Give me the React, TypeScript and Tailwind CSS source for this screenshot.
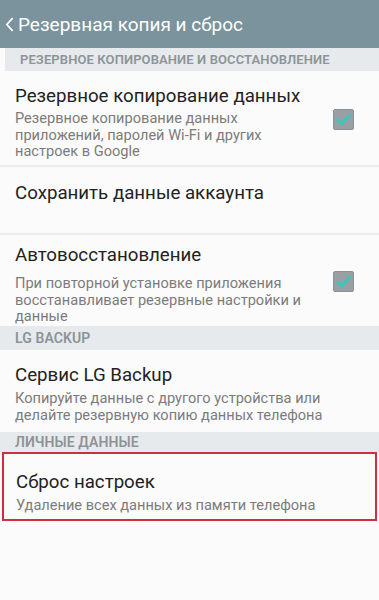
import React from 'react'

const font = { fontFamily: 'Roboto, "Noto Sans", sans-serif' }

function Check() {
  return (
    <div className="flex h-[21px] w-[21px] shrink-0 items-center justify-center rounded-[2px] bg-[#9a9fa3] border border-[#8d9296]">
      <svg viewBox="0 0 20 20" className="h-[17px] w-[17px]">
        <path d="M3 10.5 L8 15 L17 5" fill="none" stroke="#33cbbd" strokeWidth="3.2" strokeLinecap="round" strokeLinejoin="round" />
      </svg>
    </div>
  )
}

function Section({ children, className = '' }: { children: React.ReactNode; className?: string }) {
  return (
    <div className={`flex items-center bg-[#e6eaec] pl-[15px] font-semibold tracking-[0.1px] text-[#8e9397] ${className}`}>
      {children}
    </div>
  )
}

export default function App() {
  return (
    <div className="h-[600px] w-[379px] overflow-hidden bg-[#fbfbfb]" style={font}>
      {/* Top bar */}
      <div className="flex h-[48px] items-center gap-[4px] bg-[#7a939c] pl-[5px] text-white">
        <svg viewBox="0 0 10 16" className="h-[15px] w-[9px]">
          <path d="M8 1.5 L2 8 L8 14.5" fill="none" stroke="white" strokeWidth="2" strokeLinecap="round" strokeLinejoin="round" />
        </svg>
        <span className="text-[19px] leading-none">Резервная копия и сброс</span>
      </div>

      <Section className="ml-[5px] h-[23px] text-[13px]">РЕЗЕРВНОЕ КОПИРОВАНИЕ И ВОССТАНОВЛЕНИЕ</Section>

      {/* Backup data */}
      <div className="flex h-[96px] items-start border-b-2 border-[#ececec] pl-[15px] pr-[25px] pt-[13px]">
        <div className="flex-1">
          <div className="text-[18.7px] leading-[24px] text-[#222]">Резервное копирование данных</div>
          <div className="mt-[2px] text-[14.6px] leading-[16.5px] text-[#7b7b7b]">
            Резервное копирование данных
            <br />
            приложений, паролей Wi-Fi и других
            <br />
            настроек в Google
          </div>
        </div>
        <div className="mt-[25px]">
          <Check />
        </div>
      </div>

      {/* Save account */}
      <div className="h-[68px] border-b-2 border-[#ececec] pl-[15px] pt-[14px]">
        <div className="text-[18.7px] leading-[24px] text-[#222]">Сохранить данные аккаунта</div>
      </div>

      {/* Auto restore */}
      <div className="flex h-[91px] items-start pl-[15px] pr-[25px] pt-[8px]">
        <div className="flex-1">
          <div className="text-[18.7px] leading-[24px] text-[#222]">Автовосстановление</div>
          <div className="mt-[8px] text-[14.6px] leading-[16.5px] text-[#7b7b7b]">
            При повторной установке приложения
            <br />
            восстанавливает резервные настройки и
            <br />
            данные
          </div>
        </div>
        <div className="mt-[28px]">
          <Check />
        </div>
      </div>

      <Section className="h-[24px] text-[14px]">LG BACKUP</Section>

      {/* LG Backup */}
      <div className="h-[82px] pl-[15px] pt-[13px]">
        <div className="text-[18.7px] leading-[24px] text-[#222]">Сервис LG Backup</div>
        <div className="mt-[3px] text-[14.6px] leading-[16.5px] text-[#7b7b7b]">
          Копируйте данные с другого устройства или
          <br />
          делайте резервную копию данных телефона
        </div>
      </div>

      <Section className="h-[20px] text-[14px]">ЛИЧНЫЕ ДАННЫЕ</Section>

      {/* Reset */}
      <div className="mx-[2px] h-[69px] border-2 border-[#c9313f] pl-[12px] pt-[16px]">
        <div className="text-[18.7px] leading-[24px] text-[#222]">Сброс настроек</div>
        <div className="mt-[3px] text-[14.6px] leading-[16.5px] text-[#7b7b7b]">Удаление всех данных из памяти телефона</div>
      </div>
    </div>
  )
}
